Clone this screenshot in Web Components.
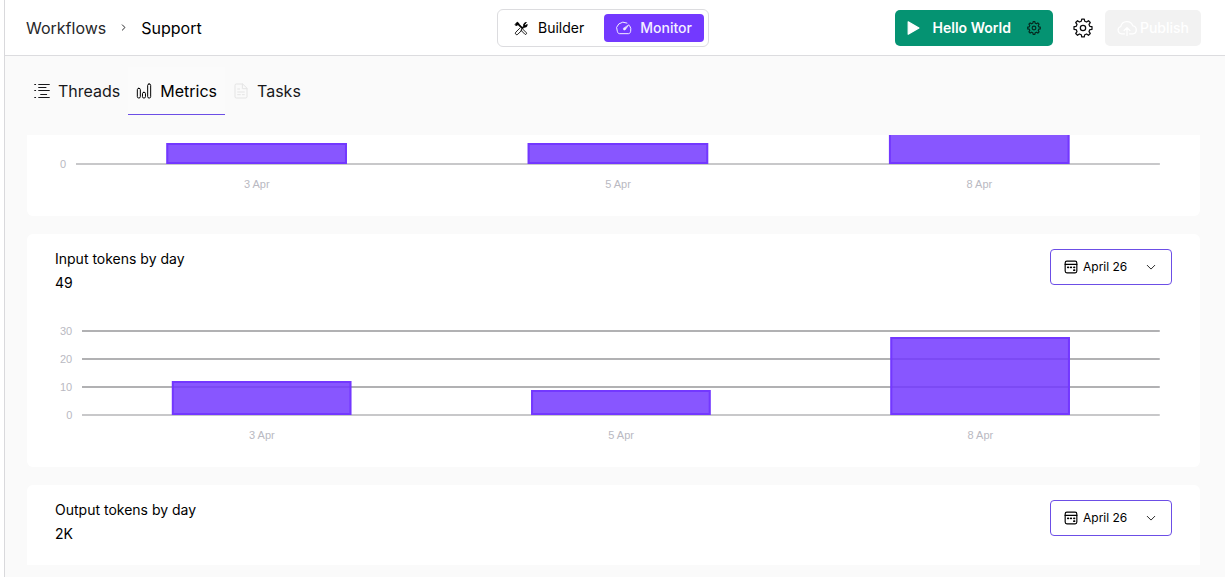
<!DOCTYPE html>
<html lang="en">
<head>
<meta charset="utf-8">
<meta name="viewport" content="width=device-width, initial-scale=1">
<title>Support - Metrics</title>
<style>
    html, body {
        height: 100%;
        margin: 0;
    }
    body {
        box-sizing: border-box;
        padding-left: 4px;
        background: #fff;
        color: #0c0c0e;
        font-family: Inter, "Liberation Sans", sans-serif;
        font-size: 16px;
        line-height: 24px;
    }
</style>
</head>
<body>
<workflow-page>
    <top-bar slot="header" section="Workflows" page="Support"></top-bar>
    <nav-tab slot="tabs" icon="list">Threads</nav-tab>
    <nav-tab slot="tabs" icon="bars" selected>Metrics</nav-tab>
    <nav-tab slot="tabs" icon="file" muted>Tasks</nav-tab>
    <metric-card>
        <bar-chart labels="3 Apr,5 Apr,8 Apr" values="1,1,3" ticks="0" max="4"></bar-chart>
    </metric-card>
    <metric-card heading="Input tokens by day" total="49" month="April 26">
        <bar-chart labels="3 Apr,5 Apr,8 Apr" values="12,9,28" ticks="30,20,10,0" max="30"></bar-chart>
    </metric-card>
    <metric-card heading="Output tokens by day" total="2K" month="April 26"></metric-card>
</workflow-page>

<script>
(function () {
    // outline of an eight-toothed cog on a 24x24 grid
    function cog() {
        const pts = [];
        const add = (r, deg) => {
            const a = deg * Math.PI / 180;
            pts.push((12 + r * Math.sin(a)).toFixed(2) + ' ' + (12 - r * Math.cos(a)).toFixed(2));
        };
        for (let i = 0; i < 8; i++) {
            add(8.4, i * 45 - 14);
            add(10.9, i * 45 - 8);
            add(10.9, i * 45 + 8);
            add(8.4, i * 45 + 14);
        }
        return `<path d="M${pts.join('L')}Z"/><circle cx="12" cy="12" r="3.2"/>`;
    }

    const icons = {
        list: '<path d="M7 2.250h16M7 6.750h11M7 11.250h16M10 17.250h9M7 21.750h16"/><path d="M1 2.250h1.500M1 11.250h1.500M1 21.750h1.500"/>',
        bars: '<rect x="2" y="8" width="4.500" height="14.500" rx="2"/><rect x="9.700" y="14" width="4.500" height="8.500" rx="2"/><rect x="17.500" y="1.500" width="4.500" height="21" rx="2"/>',
        file: '<path d="M14 1.500H5a2 2 0 0 0-2 2v17a2 2 0 0 0 2 2h14a2 2 0 0 0 2-2V8.500zM14 1.500v7h7M7 9h3M7 13.500h10M7 17.500h4M14 17.500h3"/>',
        tools: '<g transform="translate(.5 2) scale(.88)"><path d="M13 11 5 3" stroke-width="3"/><path d="m1.500 5 4-3.500 2 2-3.500 4z" fill="currentColor"/><path d="m14 13 6.500 6.500a1.800 1.800 0 0 1-2.500 2.500L11.500 15.500z"/><path d="m9 12-6.500 6.500a2.300 2.300 0 0 0 3.500 3.500l6.500-6.500"/><path d="m13 11 3-3a4.500 4.500 0 0 1 4.500-6L17.500 5l1.500 2 3-1.500A4.500 4.500 0 0 1 17 10l-2 2z" fill="currentColor"/></g>',
        gauge: '<path d="M16.500 4.500A10.500 9.500 0 0 0 2 17c.6 2 1.500 3.500 3 3.500h14c1.500 0 2.400-1.500 3-3.500a10 10 0 0 0-1.500-8.500"/><path d="M19 7.500 13.500 15a2 2 0 0 1-2.500-2z" fill="currentColor" stroke-width="1"/>',
        play: '<path d="M2 1.500v21L20.500 12z" fill="currentColor" stroke-width="2"/>',
        cog: cog(),
        cloud: '<path d="M9 19H5.500a4.500 4.500 0 0 1-1-8.800A7.500 7.500 0 0 1 19 9.500a4.800 4.800 0 0 1 0 9.500h-4M12 21v-9M8.500 15l3.500-3.500 3.500 3.500"/>',
        calendar: '<rect x="2" y="2" width="20" height="20" rx="3"/><path d="M2 7.500h20"/><path d="M6.500 12.500h1M11.500 12.500h1M17 12.500h1M17 17.500h1" stroke-width="3"/>',
        down: '<path d="m3 8 9 9 9-9"/>',
        right: '<path d="m8 3 9 9-9 9"/>'
    };

    function define(name, render) {
        customElements.define(name, class extends HTMLElement {
            constructor() {
                super();
                this.attachShadow({ mode: 'open' });
            }
            connectedCallback() {
                const template = document.createElement('template');
                template.innerHTML = render(this);
                this.shadowRoot.replaceChildren(template.content.cloneNode(true));
            }
        });
    }

    define('ui-icon', el => `
        <style>
            :host {
                display: block;
                flex: none;
                width: var(--icon-size, 16px);
                height: var(--icon-size, 16px);
            }
            svg {
                display: block;
                width: 100%;
                height: 100%;
                fill: none;
                stroke: currentColor;
                stroke-width: var(--icon-stroke, 1.5);
                stroke-linecap: round;
                stroke-linejoin: round;
            }
        </style>
        <svg viewBox="0 0 24 24" aria-hidden="true">${icons[el.getAttribute('name')]}</svg>`);

    define('workflow-page', () => `
        <style>
            :host {
                display: flex;
                flex-direction: column;
                box-sizing: border-box;
                height: 100%;
                border-left: 1px solid #d9d9dc;
                background: #fafafa;
            }
            nav {
                display: flex;
                padding: 11px 21px 20px;
            }
            main {
                display: flex;
                flex: 1;
                flex-direction: column;
                gap: 18px;
                min-height: 0;
                margin: 0 25px 12px 22px;
                overflow-y: auto;
                scrollbar-width: none;
            }
        </style>
        <slot name="header"></slot>
        <nav><slot name="tabs"></slot></nav>
        <main><slot></slot></main>`);

    define('top-bar', el => `
        <style>
            :host {
                display: grid;
                grid-template-columns: 1fr auto 1fr;
                align-items: center;
                height: 55px;
                padding-right: 24px;
                border-bottom: 1px solid #dcdcdf;
                background: #fff;
            }
            .crumbs {
                display: flex;
                align-items: center;
                gap: 14px;
                padding-left: 21px;
            }
            a {
                color: #27272a;
                text-decoration: none;
            }
            a[aria-current] {
                color: #000;
            }
            .crumbs ui-icon {
                --icon-size: 7px;
                --icon-stroke: 3;
            }
            .modes {
                display: flex;
                padding: 4px;
                border: 1px solid #dcdcdf;
                border-radius: 6px;
            }
            .actions {
                display: flex;
                align-items: center;
                justify-content: flex-end;
            }
            button {
                display: flex;
                align-items: center;
                box-sizing: border-box;
                height: 36px;
                padding: 0 12px;
                border: 0;
                border-radius: 5px;
                background: none;
                color: inherit;
                font: inherit;
                font-size: 14px;
                cursor: pointer;
            }
            .run {
                gap: 12px;
                background: #059372;
                color: #fff;
                font-weight: 600;
            }
            .run ui-icon {
                --icon-size: 14px;
            }
            .run ui-icon[name=cog] {
                --icon-stroke: 2;
                margin-left: 4px;
                color: #06281f;
            }
            .settings {
                margin: 0 4px 0 12px;
                padding: 0 8px;
            }
            .settings ui-icon {
                --icon-size: 20px;
            }
            .publish {
                gap: 3px;
                background: #f2f2f2;
                color: #fff;
                font-weight: 500;
            }
            .publish ui-icon {
                --icon-size: 20px;
            }
        </style>
        <div class="crumbs">
            <a href="#workflows">${el.getAttribute('section')}</a>
            <ui-icon name="right"></ui-icon>
            <a href="#support" aria-current="page">${el.getAttribute('page')}</a>
        </div>
        <div class="modes">
            <mode-option icon="tools">Builder</mode-option>
            <mode-option icon="gauge" selected>Monitor</mode-option>
        </div>
        <div class="actions">
            <button class="run"><ui-icon name="play"></ui-icon>Hello World<ui-icon name="cog"></ui-icon></button>
            <button class="settings" aria-label="Settings"><ui-icon name="cog"></ui-icon></button>
            <button class="publish" disabled><ui-icon name="cloud"></ui-icon>Publish</button>
        </div>`);

    define('mode-option', el => `
        <style>
            :host {
                display: block;
            }
            button {
                display: flex;
                align-items: center;
                gap: 8px;
                height: 28px;
                padding: 0 12px;
                border: 0;
                border-radius: 4px;
                background: none;
                color: #000;
                font: inherit;
                font-size: 14px;
                cursor: pointer;
            }
            :host([selected]) button {
                background: #7339ff;
                color: #f4efff;
                font-weight: 500;
            }
            :host(:not([selected])) {
                margin-right: 8px;
            }
        </style>
        <button aria-pressed="${el.hasAttribute('selected')}"><ui-icon name="${el.getAttribute('icon')}"></ui-icon><slot></slot></button>`);

    define('nav-tab', el => `
        <style>
            :host {
                display: block;
            }
            a {
                display: flex;
                align-items: center;
                gap: 8px;
                box-sizing: border-box;
                height: 48px;
                padding: 0 8px;
                border-bottom: 1px solid transparent;
                color: #18181b;
                text-decoration: none;
            }
            :host([selected]) a {
                border-bottom-color: #6c4ee6;
                background: #fbfbfb;
                color: #000;
            }
            :host([muted]) ui-icon {
                color: #e4e4e4;
            }
        </style>
        <a href="#tab"><ui-icon name="${el.getAttribute('icon')}"></ui-icon><slot></slot></a>`);

    define('metric-card', el => `
        <style>
            :host {
                display: flex;
                flex: none;
                flex-direction: column;
                box-sizing: border-box;
                min-height: 233px;
                padding: 13px 28px 24px;
                border-radius: 6px;
                background: #fff;
            }
            header {
                display: flex;
                align-items: flex-start;
                justify-content: space-between;
                margin-bottom: 28px;
                color: #000;
                font-size: 14px;
            }
            h2, p {
                margin: 0;
                font-size: inherit;
                font-weight: 400;
            }
            month-select {
                margin-top: 2px;
            }
            ::slotted(bar-chart) {
                margin-top: auto;
            }
        </style>
        ${el.hasAttribute('heading') ? `
        <header>
            <div>
                <h2>${el.getAttribute('heading')}</h2>
                <p>${el.getAttribute('total')}</p>
            </div>
            <month-select value="${el.getAttribute('month')}"></month-select>
        </header>` : ''}
        <slot></slot>`);

    define('month-select', el => `
        <style>
            :host {
                display: block;
            }
            label {
                display: flex;
                align-items: center;
                gap: 5px;
                box-sizing: border-box;
                width: 122px;
                height: 36px;
                padding: 0 15px 0 13px;
                border: 1px solid #6c4ee6;
                border-radius: 4px;
            }
            select {
                flex: 1;
                min-width: 0;
                padding: 0;
                border: 0;
                outline: 0;
                background: none;
                appearance: none;
                color: inherit;
                font: inherit;
                font-size: 12px;
            }
            ui-icon {
                --icon-size: 14px;
                --icon-stroke: 2;
            }
            ui-icon[name=down] {
                --icon-size: 10px;
            }
        </style>
        <label>
            <ui-icon name="calendar"></ui-icon>
            <select aria-label="Month"><option>${el.getAttribute('value')}</option></select>
            <ui-icon name="down"></ui-icon>
        </label>`);

    const PLOT = 84;

    define('bar-chart', el => {
        const list = name => el.getAttribute(name).split(',');
        const max = Number(el.getAttribute('max'));
        const ticks = list('ticks');
        const values = list('values').map(Number);
        const labels = list('labels');
        const slot = 100 / values.length;
        const lines = ticks.map(t => {
            const y = 1 + PLOT * (1 - t / max);
            return `<line class="${t === '0' ? 'base' : ''}" x1="0" x2="100%" y1="${y}" y2="${y}"/>`;
        });
        // each bar takes the middle half of its slot, and its frame lies inside it
        const bars = values.map((v, i) => {
            const h = Math.round(PLOT * v / max);
            return `
                <svg x="${slot * (i + .25)}%" y="${PLOT + 1 - h}" width="${slot / 2}%" height="${h}">
                    <rect class="fill" width="100%" height="100%"/>
                    <rect class="frame" width="100%" height="100%"/>
                </svg>`;
        });
        return `
        <style>
            :host {
                display: grid;
                grid-template-columns: auto 1fr;
                gap: 4px 10px;
                padding: 0 12px 0 5px;
                color: #b9b9c2;
                font-family: "Liberation Sans", Arial, sans-serif;
                font-size: 11px;
                line-height: 16px;
            }
            .scale {
                display: flex;
                flex-direction: column;
                justify-content: space-between;
                text-align: right;
            }
            .scale span:only-child {
                margin-top: auto;
            }
            .plot {
                display: block;
                width: 100%;
                height: 86px;
                margin: 7px 0;
            }
            line {
                stroke: #b1b1b3;
                stroke-width: 2;
            }
            .base {
                stroke: #c8c8ca;
            }
            .fill {
                fill: #7338ff;
                fill-opacity: .85;
            }
            .frame {
                fill: none;
                stroke: #7338ff;
                stroke-width: 4;
            }
            .days {
                display: flex;
                grid-column: 2;
            }
            .days span {
                flex: 1;
                text-align: center;
            }
        </style>
        <div class="scale">${ticks.map(t => `<span>${t}</span>`).join('')}</div>
        <svg class="plot">${lines.join('')}${bars.join('')}</svg>
        <div class="days">${labels.map(l => `<span>${l}</span>`).join('')}</div>`;
    });

    // open with the token cards in view
    document.querySelector('workflow-page').shadowRoot.querySelector('main').scrollTop = 152;
})();
</script>
</body>
</html>
